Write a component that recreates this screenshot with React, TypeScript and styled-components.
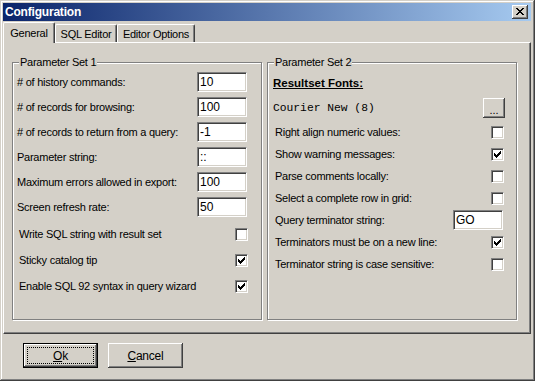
import React from 'react';
import styled, { createGlobalStyle } from 'styled-components';

const GlobalStyle = createGlobalStyle`
  html, body {
    margin: 0;
    padding: 0;
    background: #D4D0C8;
  }
  body {
    font-family: "Liberation Sans", Arial, sans-serif;
    font-size: 11px;
    letter-spacing: -0.25px;
    color: #000;
  }
`

const checkPath = 'M0 2h1v3H0zM1 3h1v3H1zM2 4h1v3H2zM3 3h1v3H3zM4 2h1v3H4zM5 1h1v3H5zM6 0h1v3H6z'
const closePath =
  'M0 0h2v1H0zM6 0h2v1H6zM1 1h2v1H1zM5 1h2v1H5zM2 2h4v1H2zM3 3h2v1H3zM2 4h4v1H2zM1 5h2v1H1zM5 5h2v1H5zM0 6h2v1H0zM6 6h2v1H6z'

const leftFields = [
  { label: '# of history commands:', value: '10' },
  { label: '# of records for browsing:', value: '100' },
  { label: '# of records to return from a query:', value: '-1' },
  { label: 'Parameter string:', value: '::' },
  { label: 'Maximum errors allowed in export:', value: '100' },
  { label: 'Screen refresh rate:', value: '50' },
]

const leftChecks = [
  { label: 'Write SQL string with result set', checked: false },
  { label: 'Sticky catalog tip', checked: true },
  { label: 'Enable SQL 92 syntax in query wizard', checked: true },
]

const Check: React.FC<{ checked: boolean }> = ({ checked }) => (
  <CheckBox>
    {checked && (
      <svg width="7" height="7" viewBox="0 0 7 7" shapeRendering="crispEdges">
        <path d={checkPath} fill="#000" />
      </svg>
    )}
  </CheckBox>
)

const App: React.FC = () => {
  return (
    <>
      <GlobalStyle />
      <Window>
        <TitleBar>
          <TitleText>Configuration</TitleText>
          <CloseButton>
            <svg width="8" height="7" viewBox="0 0 8 7" shapeRendering="crispEdges">
              <path d={closePath} fill="#000" />
            </svg>
          </CloseButton>
        </TitleBar>
        <TabStrip>
          <Tab $active $width={52}>General</Tab>
          <Tab $width={62}>SQL Editor</Tab>
          <Tab $width={78}>Editor Options</Tab>
        </TabStrip>
        <TabPanel>
          <GroupBox $pad="6px 14px 0 4px">
            <Caption>Parameter Set 1</Caption>
            {leftFields.map(f => (
              <FieldRow key={f.label}>
                <Label>{f.label}</Label>
                <TextBox readOnly value={f.value} />
              </FieldRow>
            ))}
            <CheckList>
              {leftChecks.map(c => (
                <CheckRow key={c.label} $h={26}>
                  <Label $indent>{c.label}</Label>
                  <CheckSlot>
                    <Check checked={c.checked} />
                  </CheckSlot>
                </CheckRow>
              ))}
            </CheckList>
          </GroupBox>
          <GroupBox $pad="8px 12px 0 5px">
            <Caption>Parameter Set 2</Caption>
            <HeadingRow>
              <Heading>Resultset Fonts:</Heading>
            </HeadingRow>
            <FontRow>
              <FontName>Courier New (8)</FontName>
              <BrowseButton>...</BrowseButton>
            </FontRow>
            <CheckRow $h={22}>
              <Label $indent>Right align numeric values:</Label>
              <Check checked={false} />
            </CheckRow>
            <CheckRow $h={22}>
              <Label $indent>Show warning messages:</Label>
              <Check checked />
            </CheckRow>
            <CheckRow $h={22}>
              <Label $indent>Parse comments locally:</Label>
              <Check checked={false} />
            </CheckRow>
            <CheckRow $h={22}>
              <Label $indent>Select a complete row in grid:</Label>
              <Check checked={false} />
            </CheckRow>
            <CheckRow $h={22}>
              <Label $indent>Query terminator string:</Label>
              <TextBox readOnly value="GO" $shift={1} />
            </CheckRow>
            <CheckRow $h={22}>
              <Label $indent>Terminators must be on a new line:</Label>
              <Check checked />
            </CheckRow>
            <CheckRow $h={22}>
              <Label $indent>Terminator string is case sensitive:</Label>
              <Check checked={false} />
            </CheckRow>
          </GroupBox>
        </TabPanel>
        <ButtonBar>
          <PushButton $default>
            <FocusRect $show>
              <u>O</u>k
            </FocusRect>
          </PushButton>
          <PushButton>
            <FocusRect>
              <u>C</u>ancel
            </FocusRect>
          </PushButton>
        </ButtonBar>
      </Window>
    </>
  )
}

const raised = `
  box-shadow: inset -1px -1px #404040, inset 1px 1px #fff,
    inset -2px -2px #808080, inset 2px 2px #D4D0C8;
`

const sunken = `
  border-top: 1px solid #808080;
  border-left: 1px solid #808080;
  border-bottom: 1px solid #fff;
  border-right: 1px solid #fff;
  box-shadow: inset 1px 1px #404040, inset -1px -1px #D4D0C8;
  background: #fff;
`

const Window = styled.div`
  width: 535px;
  height: 381px;
  box-sizing: border-box;
  padding: 3px 4px 4px 3px;
  background: #D4D0C8;
  box-shadow: inset -1px -1px #404040, inset 1px 1px #D4D0C8,
    inset -2px -2px #808080, inset 2px 2px #fff;
  display: flex;
  flex-direction: column;
`

const TitleBar = styled.div`
  height: 18px;
  display: flex;
  align-items: center;
  padding: 0 3px 0 2px;
  background: linear-gradient(to right, #0A246A, #A6CAF0);
`

const TitleText = styled.span`
  color: #fff;
  font-weight: bold;
  font-size: 12px;
  letter-spacing: -0.2px;
`

const CloseButton = styled.div`
  margin-left: auto;
  width: 16px;
  height: 14px;
  box-sizing: border-box;
  padding: 0 1px 1px 0;
  background: #D4D0C8;
  ${raised}
  display: flex;
  align-items: center;
  justify-content: center;
`

const TabStrip = styled.div`
  height: 21px;
  display: flex;
  align-items: flex-end;
`

const Tab = styled.div<{ $active?: boolean; $width: number }>`
  position: relative;
  z-index: ${p => (p.$active ? 1 : 0)};
  width: ${p => p.$width}px;
  height: ${p => (p.$active ? 21 : 18)}px;
  margin-bottom: ${p => (p.$active ? -1 : 0)}px;
  padding-bottom: ${p => (p.$active ? 1 : 0)}px;
  box-sizing: border-box;
  background: #D4D0C8;
  border-top: 1px solid #fff;
  border-left: 1px solid #fff;
  border-right: 1px solid #404040;
  border-radius: 2px 2px 0 0;
  box-shadow: inset -1px 0 #808080;
  display: flex;
  align-items: center;
  justify-content: center;
`

const TabPanel = styled.div`
  height: 292px;
  box-sizing: border-box;
  border-top: 1px solid #fff;
  border-left: 1px solid #fff;
  border-right: 1px solid #404040;
  border-bottom: 1px solid #404040;
  box-shadow: inset -1px -1px #808080;
  padding: 19px 0 0 8px;
  display: flex;
  align-items: flex-start;
  gap: 5px;
`

const GroupBox = styled.div<{ $pad: string }>`
  position: relative;
  width: 250px;
  height: 258px;
  box-sizing: border-box;
  border: 1px solid #808080;
  box-shadow: inset 1px 1px #fff, 1px 1px #fff;
  padding: ${p => p.$pad};
  display: flex;
  flex-direction: column;
`

const Caption = styled.span`
  position: absolute;
  top: -7px;
  left: 6px;
  padding: 0 1px;
  line-height: 13px;
  background: #D4D0C8;
`

const FieldRow = styled.div`
  height: 25px;
  display: flex;
  align-items: center;
  justify-content: space-between;
`

const CheckList = styled.div`
  margin-top: 2px;
  display: flex;
  flex-direction: column;
`

const CheckRow = styled.div<{ $h: number }>`
  height: ${p => p.$h}px;
  display: flex;
  align-items: center;
  justify-content: space-between;
`

const CheckSlot = styled.span`
  display: flex;
  margin-right: -1px;
`

const Label = styled.span<{ $indent?: boolean }>`
  padding-left: ${p => (p.$indent ? 2 : 0)}px;
  white-space: nowrap;
`

const TextBox = styled.input<{ $shift?: number }>`
  width: 50px;
  height: 20px;
  box-sizing: border-box;
  margin: 0 ${p => p.$shift ?? 0}px 0 0;
  padding: 0 2px 0 2px;
  ${sunken}
  font: inherit;
  letter-spacing: 0;
  font-size: 12px;
  color: #000;
  outline: none;
`

const CheckBox = styled.span`
  width: 13px;
  height: 13px;
  box-sizing: border-box;
  ${sunken}
  display: flex;
  align-items: center;
  justify-content: center;
`

const HeadingRow = styled.div`
  height: 24px;
  display: flex;
  align-items: center;
`

const Heading = styled.span`
  font-weight: bold;
  font-size: 11.5px;
  letter-spacing: 0;
  text-decoration: underline;
`

const FontRow = styled.div`
  height: 26px;
  display: flex;
  align-items: center;
  justify-content: space-between;
`

const FontName = styled.span`
  font-family: "Liberation Mono", "Courier New", monospace;
  font-size: 11.3px;
  letter-spacing: 0;
`

const BrowseButton = styled.div`
  width: 22px;
  height: 20px;
  margin-right: -1px;
  box-sizing: border-box;
  padding-top: 3px;
  ${raised}
  display: flex;
  align-items: center;
  justify-content: center;
  letter-spacing: 0;
`

const ButtonBar = styled.div`
  flex: 1;
  display: flex;
  align-items: center;
  padding-left: 20px;
  gap: 10px;
`

const PushButton = styled.div<{ $default?: boolean }>`
  width: 75px;
  height: 25px;
  box-sizing: border-box;
  padding: ${p => (p.$default ? 3 : 4)}px;
  border: ${p => (p.$default ? '1px solid #000' : 'none')};
  ${raised}
  display: flex;
  font-size: 12px;
  letter-spacing: -0.2px;
`

const FocusRect = styled.span<{ $show?: boolean }>`
  flex: 1;
  border: 1px dotted ${p => (p.$show ? '#000' : 'transparent')};
  display: flex;
  align-items: center;
  justify-content: center;
`

export default App
